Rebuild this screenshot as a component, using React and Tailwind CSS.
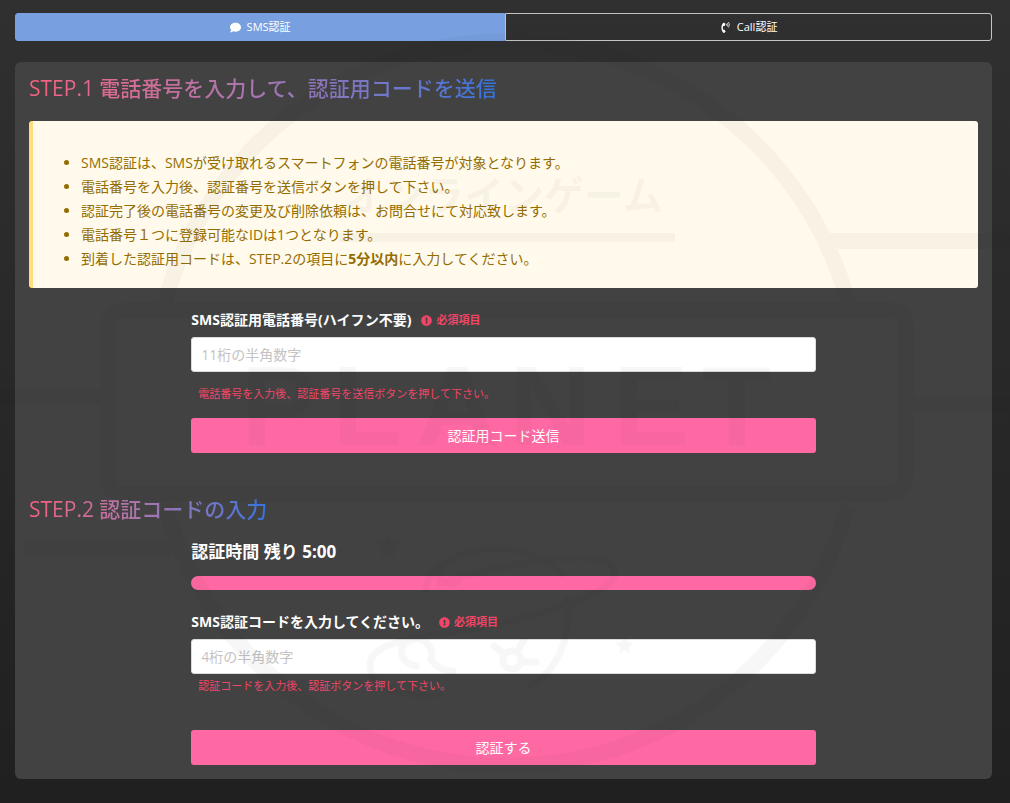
import { useState } from "react";
import { FaComment, FaExclamationCircle, FaPhoneVolume } from "react-icons/fa";

const notices = [
  "SMS認証は、SMSが受け取れるスマートフォンの電話番号が対象となります。",
  "電話番号を入力後、認証番号を送信ボタンを押して下さい。",
  "認証完了後の電話番号の変更及び削除依頼は、お問合せにて対応致します。",
  "電話番号１つに登録可能なIDは1つとなります。",
];

function Tab({ active, onClick, icon, label, className }) {
  return (
    <button
      type="button"
      onClick={onClick}
      className={`flex h-7 grow items-center justify-center gap-1.5 border text-[11px] text-white ${className} ${
        active ? "border-[#789fe0] bg-[#789fe0]" : "border-[#c4c4c4]"
      }`}
    >
      {icon}
      {label}
    </button>
  );
}

function StepTitle({ children }) {
  return (
    <h2 className="w-fit bg-linear-to-r from-[#f8607f] to-[#3273dc] bg-clip-text text-[21px] leading-7 font-medium text-transparent">
      {children}
    </h2>
  );
}

function FieldLabel({ htmlFor, children }) {
  return (
    <label
      htmlFor={htmlFor}
      className="flex items-center gap-2.5 text-sm leading-5 font-bold text-white"
    >
      {children}
      <span className="flex items-center gap-1 text-[11px] text-[#f14668]">
        <FaExclamationCircle />
        必須項目
      </span>
    </label>
  );
}

function TextBox(props) {
  return (
    <input
      type="text"
      inputMode="numeric"
      className="mt-[7px] block h-[35px] w-full rounded-[3px] border border-[#dbdbdb] bg-white px-[9px] text-sm text-[#363636] placeholder:text-[#c3c3c3]"
      {...props}
    />
  );
}

function SubmitButton({ children }) {
  return (
    <button
      type="submit"
      className="block h-[35px] w-full rounded-[3px] bg-[#ff69a3] text-sm text-white"
    >
      {children}
    </button>
  );
}

// faint logo laid over the whole page
function Watermark() {
  return (
    <svg
      viewBox="0 0 1010 803"
      preserveAspectRatio="xMidYMin slice"
      className="pointer-events-none absolute inset-0 h-full w-full fill-[#222] opacity-[0.03]"
      aria-hidden="true"
    >
      <g fill="none" stroke="#222" strokeWidth="16">
        <path d="M165 302A354 354 0 0 1 848 302" />
        <path d="M165 505A354 354 0 0 0 848 505" />
        <rect x="108" y="310" width="798" height="184" rx="16" />
        <path d="M828 241H1010M0 397H100M914 405H1010M24 548H170" />
      </g>
      <path d="M339 233h336v9H339z" />
      <g className="font-['Noto_Sans_CJK_JP',sans-serif] font-bold">
        <text x="344" y="210" fontSize="40">
          オンラインゲーム
        </text>
      </g>
      <g className="font-['Liberation_Sans',sans-serif] font-bold">
        <text x="241 332 416 509 613 702" y="445" fontSize="114">
          PLANET
        </text>
      </g>
      <g fill="none" stroke="#222" strokeWidth="7" strokeLinecap="round">
        <path d="M425 590C432 548 520 530 562 574M567 600C572 640 556 672 530 685" />
        <path d="M440 583C500 565 590 548 610 564C634 588 560 610 495 624C430 638 372 638 370 664C368 686 398 698 440 694" />
        <path d="M416 666c-20-4-18-24-2-27c12-2 20 10 17 20c6 10 14 12 22 12" />
        <circle cx="512" cy="660" r="9" />
        <path d="M522 662h14M494 646l9 7M518 650l6-10" />
        <path d="M440 575c0 12 20 12 20 0" />
      </g>
      <path d="M388 532l4 9 9 1-7 7 2 9-8-5-8 5 2-9-7-7 9-1zM625 636l3 6 6 1-5 4 1 7-5-4-6 4 1-7-5-4 7-1z" />
    </svg>
  );
}

export default function App() {
  const [tab, setTab] = useState("sms");
  const [phone, setPhone] = useState("");
  const [code, setCode] = useState("");

  const handleSubmit = (e) => {
    e.preventDefault();
  };

  return (
    <div className="relative min-h-screen bg-linear-to-b from-[#303030] to-[#202020] pt-[13px] pr-[18px] pb-3 pl-[15px] font-['Open_Sans','Noto_Sans_CJK_JP',sans-serif]">
      {/* tabs */}
      <div className="flex">
        <Tab
          active={tab === "sms"}
          onClick={() => setTab("sms")}
          icon={<FaComment />}
          label="SMS認証"
          className="rounded-l-[3px]"
        />
        <Tab
          active={tab === "call"}
          onClick={() => setTab("call")}
          icon={<FaPhoneVolume />}
          label="Call認証"
          className="rounded-r-[3px]"
        />
      </div>

      <main className="mt-[21px] rounded-md bg-[#424242] px-[14px] pt-3 pb-[14px]">
        <StepTitle>STEP.1 電話番号を入力して、認証用コードを送信</StepTitle>

        <div className="mt-[19px] rounded-[3px] border-l-4 border-[#ffdd7d] bg-[#fffaeb] pt-[30px] pb-[17px] pl-12 text-sm text-[#946c00]">
          <ul className="list-disc leading-[24px]">
            {notices.map((text) => (
              <li key={text}>{text}</li>
            ))}
            <li>
              到着した認証用コードは、STEP.2の項目に
              <strong>5分以内</strong>に入力してください。
            </li>
          </ul>
        </div>

        <form
          onSubmit={handleSubmit}
          className="mx-auto mt-[22px] w-[66%] px-px"
        >
          <FieldLabel htmlFor="phone">
            SMS認証用電話番号(ハイフン不要)
          </FieldLabel>
          <TextBox
            id="phone"
            placeholder="11桁の半角数字"
            value={phone}
            onChange={(e) => setPhone(e.target.value)}
          />
          <p className="mt-3 mb-[14px] px-[7px] text-[11px] leading-5 text-[#f14668]">
            電話番号を入力後、認証番号を送信ボタンを押して下さい。
          </p>
          <SubmitButton>認証用コード送信</SubmitButton>
        </form>

        <div className="mt-[42px]">
          <StepTitle>STEP.2 認証コードの入力</StepTitle>
        </div>

        <form onSubmit={handleSubmit} className="mx-auto mt-[17px] w-[66%] px-px">
          <p className="text-[17px] leading-6 font-bold text-white">
            認証時間 残り 5:00
          </p>
          {/* remaining time */}
          <div
            role="progressbar"
            aria-label="認証時間"
            aria-valuenow={300}
            aria-valuemax={300}
            className="mt-3 mb-[22px] h-[14px] rounded-full bg-[#ff69a3]"
          />
          <FieldLabel htmlFor="code">
            SMS認証コードを入力してください。
          </FieldLabel>
          <TextBox
            id="code"
            placeholder="4桁の半角数字"
            value={code}
            onChange={(e) => setCode(e.target.value)}
          />
          <p className="mt-[2px] mb-[34px] px-[7px] text-[11px] leading-5 text-[#f14668]">
            認証コードを入力後、認証ボタンを押して下さい。
          </p>
          <SubmitButton>認証する</SubmitButton>
        </form>
      </main>

      <Watermark />
    </div>
  );
}
